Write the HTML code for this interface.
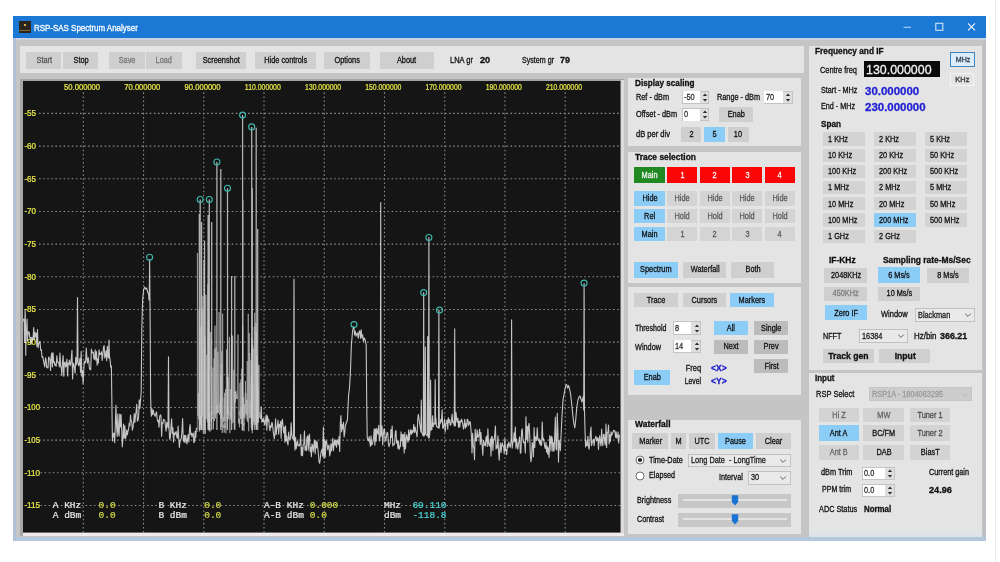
<!DOCTYPE html>
<html lang="en"><head><meta charset="utf-8"><title>RSP-SAS Spectrum Analyser</title>
<style>
html,body{margin:0;padding:0;background:#fff;}
body{position:relative;width:1000px;height:562px;overflow:hidden;font-family:"Liberation Sans",sans-serif;}
#w{position:absolute;left:0;top:0;width:1000px;height:562px;filter:blur(0.5px);}
#w>div,#w>span,#w>svg{position:absolute;display:block;}
#w>span{white-space:pre;-webkit-text-stroke:0.3px;}
svg text{font-family:"Liberation Sans",sans-serif;}
</style></head><body><div id="w">
<div style="left:995.3px;top:0.0px;width:1.0px;height:562.0px;background:#ececec;"></div>
<div style="left:13.0px;top:16.0px;width:973.3px;height:524.6px;background:#c5c5c5;"></div>
<div style="left:13.0px;top:16.0px;width:973.3px;height:22.1px;background:#1b78d4;"></div>
<div style="left:13.0px;top:38.1px;width:973.3px;height:1.5px;background:#ccd0de;"></div>
<div style="left:13.0px;top:536.6px;width:973.3px;height:4.0px;background:#b3c8dd;"></div>
<div style="left:13.0px;top:38.1px;width:3.2px;height:502.5px;background:#b0c2d4;"></div>
<div style="left:982.6px;top:39.6px;width:3.7px;height:497.0px;background:#bcbfc3;"></div>
<div style="left:18.8px;top:21.0px;width:11.8px;height:11.6px;background:#2a2420;"></div>
<div style="left:19.4px;top:29.6px;width:10.6px;height:1.4px;background:#8a6a20;"></div>
<div style="left:23.7px;top:24.0px;width:2.0px;height:1.8px;background:#d8b050;"></div>
<span style="left:34.0px;top:22.0px;font-size:9.2px;line-height:12px;color:#ffffff;transform:scaleX(0.865);transform-origin:0 50%;">RSP-SAS Spectrum Analyser</span>
<svg style="left:900px;top:18px" width="84" height="18" viewBox="0 0 84 18"><path d="M3.5 9.3 H11" stroke="#b4d6f6" stroke-width="1.1"/><rect x="35.8" y="5.3" width="7" height="7" fill="none" stroke="#d2e5f8" stroke-width="1.1"/><path d="M68 5.3 L75 12.3 M75 5.3 L68 12.3" stroke="#f4f8fc" stroke-width="1.1"/></svg>
<div style="left:20.4px;top:46.1px;width:783.4px;height:26.9px;background:#e4e4e4;"></div>
<div style="left:26.2px;top:52.4px;width:35.2px;height:16.2px;background:#cfcfcf;"></div>
<span style="left:34.5px;top:55.2px;font-size:8.8px;line-height:11px;color:#555;transform:scaleX(0.835);transform-origin:50% 50%;">Start</span>
<div style="left:63.4px;top:52.4px;width:34.8px;height:16.2px;background:#cfcfcf;"></div>
<span style="left:71.7px;top:55.2px;font-size:8.8px;line-height:11px;color:#101010;transform:scaleX(0.835);transform-origin:50% 50%;">Stop</span>
<div style="left:109.4px;top:52.4px;width:35.2px;height:16.2px;background:#cfcfcf;"></div>
<span style="left:117.0px;top:55.2px;font-size:8.8px;line-height:11px;color:#777;transform:scaleX(0.835);transform-origin:50% 50%;">Save</span>
<div style="left:146.4px;top:52.4px;width:35.6px;height:16.2px;background:#cfcfcf;"></div>
<span style="left:154.4px;top:55.2px;font-size:8.8px;line-height:11px;color:#777;transform:scaleX(0.835);transform-origin:50% 50%;">Load</span>
<div style="left:195.8px;top:52.4px;width:50.2px;height:16.2px;background:#cfcfcf;"></div>
<span style="left:198.6px;top:55.2px;font-size:8.8px;line-height:11px;color:#101010;transform:scaleX(0.835);transform-origin:50% 50%;">Screenshot</span>
<div style="left:255.0px;top:52.4px;width:61.4px;height:16.2px;background:#cfcfcf;"></div>
<span style="left:260.0px;top:55.2px;font-size:8.8px;line-height:11px;color:#101010;transform:scaleX(0.835);transform-origin:50% 50%;">Hide controls</span>
<div style="left:324.4px;top:52.4px;width:46.0px;height:16.2px;background:#cfcfcf;"></div>
<span style="left:332.2px;top:55.2px;font-size:8.8px;line-height:11px;color:#101010;transform:scaleX(0.835);transform-origin:50% 50%;">Options</span>
<div style="left:380.0px;top:52.4px;width:53.8px;height:16.2px;background:#cfcfcf;"></div>
<span style="left:395.4px;top:55.2px;font-size:8.8px;line-height:11px;color:#101010;transform:scaleX(0.835);transform-origin:50% 50%;">About</span>
<span style="left:449.8px;top:55.3px;font-size:8.8px;line-height:11px;color:#101010;transform:scaleX(0.855);transform-origin:0 50%;">LNA gr</span>
<span style="left:480.2px;top:55.3px;font-size:8.8px;line-height:11px;color:#101010;font-weight:bold;transform:scaleX(1.042);transform-origin:0 50%;">20</span>
<span style="left:522.4px;top:55.3px;font-size:8.8px;line-height:11px;color:#101010;transform:scaleX(0.808);transform-origin:0 50%;">System gr</span>
<span style="left:559.8px;top:55.3px;font-size:8.8px;line-height:11px;color:#101010;font-weight:bold;transform:scaleX(1.022);transform-origin:0 50%;">79</span>
<div style="left:20.4px;top:78.8px;width:603.8px;height:457.6px;background:#a6a6a6;"></div>
<div style="left:23.0px;top:81.0px;width:601.2px;height:455.4px;background:#efebea;"></div>
<div style="left:620.6px;top:79.5px;width:3.6px;height:453.3px;background:#dbdbdb;"></div>
<svg style="left:23.0px;top:81.0px" width="597.6" height="451.6" viewBox="0 0 597.6 451.6">
<rect width="597.6" height="451.6" fill="#151515"/>
<path d="M60.30 11.3 V451.6 M120.54 11.3 V451.6 M180.78 11.3 V451.6 M241.02 11.3 V451.6 M301.26 11.3 V451.6 M361.50 11.3 V451.6 M421.74 11.3 V451.6 M481.98 11.3 V451.6 M542.22 11.3 V451.6 M16.0 32.42 H597.6 M16.0 65.09 H597.6 M16.0 97.76 H597.6 M16.0 130.43 H597.6 M16.0 163.10 H597.6 M16.0 195.77 H597.6 M16.0 228.44 H597.6 M16.0 261.11 H597.6 M16.0 293.78 H597.6 M16.0 326.45 H597.6 M16.0 359.12 H597.6 M17.5 391.79 H597.6 M17.5 424.46 H597.6" stroke="#d8d8d8" stroke-opacity="0.6" stroke-width="1.1" stroke-dasharray="1.6 2.5" fill="none"/>
<text x="59.1" y="9.5" font-size="8.5" fill="#e6e648" stroke="#e6e648" stroke-width="0.25" text-anchor="middle" textLength="36" lengthAdjust="spacingAndGlyphs">50.000000</text>
<text x="119.3" y="9.5" font-size="8.5" fill="#e6e648" stroke="#e6e648" stroke-width="0.25" text-anchor="middle" textLength="36" lengthAdjust="spacingAndGlyphs">70.000000</text>
<text x="179.6" y="9.5" font-size="8.5" fill="#e6e648" stroke="#e6e648" stroke-width="0.25" text-anchor="middle" textLength="36" lengthAdjust="spacingAndGlyphs">90.000000</text>
<text x="239.8" y="9.5" font-size="8.5" fill="#e6e648" stroke="#e6e648" stroke-width="0.25" text-anchor="middle" textLength="36" lengthAdjust="spacingAndGlyphs">110.000000</text>
<text x="300.1" y="9.5" font-size="8.5" fill="#e6e648" stroke="#e6e648" stroke-width="0.25" text-anchor="middle" textLength="36" lengthAdjust="spacingAndGlyphs">130.000000</text>
<text x="360.3" y="9.5" font-size="8.5" fill="#e6e648" stroke="#e6e648" stroke-width="0.25" text-anchor="middle" textLength="36" lengthAdjust="spacingAndGlyphs">150.000000</text>
<text x="420.5" y="9.5" font-size="8.5" fill="#e6e648" stroke="#e6e648" stroke-width="0.25" text-anchor="middle" textLength="36" lengthAdjust="spacingAndGlyphs">170.000000</text>
<text x="480.8" y="9.5" font-size="8.5" fill="#e6e648" stroke="#e6e648" stroke-width="0.25" text-anchor="middle" textLength="36" lengthAdjust="spacingAndGlyphs">190.000000</text>
<text x="541.0" y="9.5" font-size="8.5" fill="#e6e648" stroke="#e6e648" stroke-width="0.25" text-anchor="middle" textLength="36" lengthAdjust="spacingAndGlyphs">210.000000</text>
<text x="1.4" y="35.3" font-size="8.4" fill="#e6e648" stroke="#e6e648" stroke-width="0.25" textLength="11.6" lengthAdjust="spacingAndGlyphs">-55</text>
<text x="1.4" y="68.0" font-size="8.4" fill="#e6e648" stroke="#e6e648" stroke-width="0.25" textLength="11.6" lengthAdjust="spacingAndGlyphs">-60</text>
<text x="1.4" y="100.7" font-size="8.4" fill="#e6e648" stroke="#e6e648" stroke-width="0.25" textLength="11.6" lengthAdjust="spacingAndGlyphs">-65</text>
<text x="1.4" y="133.3" font-size="8.4" fill="#e6e648" stroke="#e6e648" stroke-width="0.25" textLength="11.6" lengthAdjust="spacingAndGlyphs">-70</text>
<text x="1.4" y="166.0" font-size="8.4" fill="#e6e648" stroke="#e6e648" stroke-width="0.25" textLength="11.6" lengthAdjust="spacingAndGlyphs">-75</text>
<text x="1.4" y="198.7" font-size="8.4" fill="#e6e648" stroke="#e6e648" stroke-width="0.25" textLength="11.6" lengthAdjust="spacingAndGlyphs">-80</text>
<text x="1.4" y="231.3" font-size="8.4" fill="#e6e648" stroke="#e6e648" stroke-width="0.25" textLength="11.6" lengthAdjust="spacingAndGlyphs">-85</text>
<text x="1.4" y="264.0" font-size="8.4" fill="#e6e648" stroke="#e6e648" stroke-width="0.25" textLength="11.6" lengthAdjust="spacingAndGlyphs">-90</text>
<text x="1.4" y="296.7" font-size="8.4" fill="#e6e648" stroke="#e6e648" stroke-width="0.25" textLength="11.6" lengthAdjust="spacingAndGlyphs">-95</text>
<text x="1.4" y="329.4" font-size="8.4" fill="#e6e648" stroke="#e6e648" stroke-width="0.25" textLength="15.6" lengthAdjust="spacingAndGlyphs">-100</text>
<text x="1.4" y="362.0" font-size="8.4" fill="#e6e648" stroke="#e6e648" stroke-width="0.25" textLength="15.6" lengthAdjust="spacingAndGlyphs">-105</text>
<text x="1.4" y="394.7" font-size="8.4" fill="#e6e648" stroke="#e6e648" stroke-width="0.25" textLength="15.6" lengthAdjust="spacingAndGlyphs">-110</text>
<text x="1.4" y="427.4" font-size="8.4" fill="#e6e648" stroke="#e6e648" stroke-width="0.25" textLength="15.6" lengthAdjust="spacingAndGlyphs">-115</text>
<path d="M174.40 351.0 L174.40 172.0 L174.85 335.0 L175.31 312.2 L175.76 338.3 L176.19 228.3 L176.64 350.7 L177.24 335.0 L177.69 344.0 L178.06 245.8 L178.51 348.1 L178.98 226.5 L179.43 335.5 L179.91 214.8 L180.36 352.5 L180.87 179.0 L181.32 337.2 L181.87 255.2 L182.32 352.9 L182.81 213.8 L183.26 338.2 L183.96 273.7 L184.41 341.3 L184.91 202.8 L185.36 338.6 L185.76 238.0 L186.21 350.3 L186.74 332.0 L187.19 350.5 L187.73 251.0 L188.18 340.8 L188.86 336.1 L189.31 338.0 L190.04 286.6 L190.49 348.3 L191.06 277.5 L191.51 340.0 L191.98 244.6 L192.43 337.4 L192.94 266.3 L193.39 332.6 L194.12 329.6 L194.57 331.8 L194.93 270.8 L195.38 332.1 L196.10 231.1 L196.55 334.0 L196.98 321.7 L197.43 331.5 L197.90 293.7 L198.35 338.1 L198.79 270.2 L199.24 352.0 L199.65 232.7 L200.10 340.9 L200.80 335.9 L201.25 351.6 L201.61 311.8 L202.06 340.5 L202.55 308.1 L203.00 352.3 L203.53 268.4 L203.98 340.5 L204.40 294.6 L204.85 333.6 L205.22 296.0 L205.67 338.1 L206.38 255.9 L206.83 352.2 L207.28 308.4 L207.73 338.5 L208.46 253.5 L208.91 342.5 L209.64 254.6 L210.09 341.6 L210.81 288.8 L211.26 347.8 L211.92 311.0 L212.37 321.3 L212.75 311.0 L213.20 317.8 L213.91 312.7 L214.36 318.2 L214.99 253.5 L215.44 341.3 L216.06 337.6 L216.51 346.3 L217.01 302.0 L217.46 337.9 L217.94 298.5 L218.39 343.1 L218.78 287.8 L219.23 349.8 L219.60 244.4 L220.05 336.8 L220.63 316.3 L221.08 350.3 L221.47 323.1 L221.92 337.4 L222.51 300.2 L222.96 333.2 L223.39 319.1 L223.84 334.3 L224.23 280.1 L224.68 341.2 L225.26 232.8 L225.71 350.3 L226.20 252.1 L226.65 337.1 L227.17 319.2 L227.62 336.3 L228.00 279.4 L228.45 343.1 L228.84 256.9 L229.29 352.3 L229.84 264.4 L230.29 340.8 L230.89 267.8 L231.34 348.7 L231.76 231.8 L232.21 343.4 L232.92 241.9 L233.37 348.1 L233.94 275.8 L234.39 341.4 L234.91 283.6 L235.36 341.8 L236.01 284.2 L236.46 336.6 L236.60 331.0" stroke="#bdbdbd" stroke-width="0.75" stroke-opacity="0.8" fill="none" stroke-linejoin="round"/>
<path d="M180.01 230.3 V349.2 M181.65 266.9 V352.4 M185.63 251.7 V347.9 M186.46 342.5 V345.1 M188.65 330.0 V333.9 M191.72 268.0 V333.9 M194.40 323.8 V330.0 M198.17 316.0 V337.0 M198.73 282.7 V346.1 M200.61 343.6 V347.2 M201.42 316.9 V338.8 M202.47 341.8 V347.4 M204.59 325.6 V333.4 M207.44 330.5 V334.7 M212.79 309.8 V311.9 M216.27 338.3 V342.9 M216.80 329.9 V334.5 M218.13 326.4 V337.2 M220.49 342.3 V344.6 M221.26 329.4 V335.8 M222.62 311.7 V331.4 M223.33 326.3 V330.4 M224.12 318.5 V339.3 M226.44 272.0 V332.2 M227.20 328.3 V330.8 M227.87 302.6 V337.5 M228.62 294.9 V346.5 M230.83 302.4 V343.7 M231.53 245.4 V339.0 M233.12 251.0 V344.6 M234.98 305.7 V340.4" stroke="#b8b8b8" stroke-width="1.9" stroke-opacity="0.62" fill="none"/>
<path d="M177.20 118.5 V349.0 M186.30 118.5 V349.0 M193.90 81.0 V349.0 M197.80 88.0 V349.0 M204.50 107.3 V349.0 M219.60 34.1 V349.0 M228.70 45.9 V349.0 M233.20 46.8 V349.0 M219.90 119.0 V349.0 M229.30 107.0 V349.0 M234.70 148.0 V349.0 M208.60 195.0 V349.0 M211.80 195.0 V349.0 M181.60 159.7 V349.0 M185.10 134.0 V349.0 M188.70 141.0 V349.0 M176.30 133.0 V349.0 M178.60 141.0 V349.0" stroke="#d0d0d0" stroke-width="1.25" stroke-opacity="0.85" fill="none"/>
<path d="M0.20 238.2 L0.52 238.1 L0.85 240.4 L1.17 238.2 L1.49 261.2 L1.82 241.4 L2.14 228.3 L2.46 242.4 L2.78 274.3 L3.11 248.4 L3.43 253.0 L3.75 244.9 L4.08 238.0 L4.40 259.6 L5.03 253.0 L5.66 250.6 L6.29 251.6 L6.92 257.3 L7.55 256.5 L8.18 263.2 L8.81 256.2 L9.44 259.3 L10.07 257.4 L10.70 246.5 L11.33 258.4 L11.96 251.3 L12.59 255.9 L13.22 252.0 L13.85 265.4 L14.48 248.6 L15.11 266.7 L15.74 262.5 L16.37 261.6 L17.00 260.5 L17.69 269.3 L18.38 268.8 L19.06 276.3 L19.75 275.6 L20.44 279.3 L21.12 283.1 L21.81 286.0 L22.50 276.7 L23.13 279.2 L23.76 286.8 L24.39 286.1 L25.02 286.9 L25.65 276.0 L26.28 277.3 L26.91 278.6 L27.54 289.5 L28.17 275.6 L28.80 271.8 L29.43 286.0 L30.06 271.9 L30.69 281.5 L31.32 280.8 L31.95 284.6 L32.58 283.1 L33.21 285.3 L33.84 274.9 L34.47 281.1 L35.10 281.4 L35.73 281.6 L36.36 285.9 L36.99 272.0 L37.62 285.0 L38.25 286.7 L38.88 294.6 L39.51 280.2 L40.14 274.6 L40.77 295.2 L41.40 281.8 L42.03 281.0 L42.66 286.0 L43.29 284.3 L43.92 278.1 L44.55 294.9 L45.18 282.2 L45.81 283.0 L46.44 279.0 L47.07 284.6 L47.70 283.5 L48.33 277.9 L48.96 269.2 L49.59 297.9 L50.22 282.0 L50.85 283.7 L51.48 287.0 L52.11 292.3 L52.74 276.4 L53.37 283.8 L54.00 281.0 L54.50 216.6 L55.00 281.0 L55.00 280.6 L55.64 284.8 L56.27 283.3 L56.91 277.2 L57.55 291.5 L58.18 270.4 L58.82 295.3 L59.45 289.2 L60.09 302.6 L60.73 290.0 L61.36 280.1 L62.00 281.7 L62.64 281.6 L63.27 267.0 L63.91 278.2 L64.55 282.2 L65.18 276.5 L65.82 280.4 L66.45 287.6 L67.09 288.4 L67.73 288.9 L68.36 268.0 L69.00 271.9 L69.64 271.0 L70.28 271.2 L70.92 278.1 L71.55 278.3 L72.19 268.8 L72.83 279.3 L73.47 270.6 L74.11 284.2 L74.75 277.7 L75.38 282.2 L76.02 268.7 L76.66 273.9 L77.30 272.4 L77.94 273.1 L78.58 270.7 L79.22 279.4 L79.85 273.7 L80.49 266.3 L81.13 264.6 L81.77 277.0 L82.41 275.1 L83.05 269.9 L83.68 279.7 L84.32 265.3 L84.96 275.4 L85.50 277.0 L86.00 259.0 L86.50 277.0 L86.50 275.4 L87.12 279.1 L87.75 286.2 L88.38 284.9 L89.40 360.0 L89.80 352.1 L90.43 356.0 L91.07 352.0 L91.70 361.7 L92.33 343.5 L92.97 324.2 L93.60 345.9 L94.23 355.2 L94.87 333.0 L95.50 351.0 L96.13 355.1 L96.77 333.0 L97.40 345.9 L98.03 333.5 L98.67 347.7 L99.30 366.0 L99.93 357.9 L100.57 343.1 L101.20 357.2 L101.83 344.9 L102.47 357.5 L103.10 355.6 L103.73 348.9 L104.37 353.8 L105.00 350.2 L105.62 348.1 L106.25 342.0 L106.88 344.9 L107.50 334.0 L108.12 339.8 L108.75 340.9 L109.38 349.2 L110.00 346.3 L110.62 341.5 L111.25 332.6 L111.88 341.5 L112.50 334.6 L113.12 330.3 L113.75 323.2 L114.38 340.2 L115.00 339.5 L115.62 335.7 L116.25 318.7 L116.88 327.4 L118.20 311.0 L118.80 249.0 L119.60 219.0 L120.60 209.0 L121.60 206.0 L122.60 208.0 L123.60 207.0 L124.60 211.0 L125.60 213.0 L126.00 219.0 L126.25 219.0 L126.60 178.5 L126.95 219.0 L127.20 249.0 L127.60 314.0 L128.00 329.0 L128.40 335.3 L129.04 327.9 L129.68 333.7 L130.32 329.4 L130.95 332.6 L131.59 334.3 L132.23 335.3 L132.87 332.4 L133.51 330.9 L134.15 337.5 L134.78 340.7 L135.42 339.3 L136.06 346.1 L136.70 335.5 L137.34 333.9 L137.98 334.6 L138.62 355.2 L139.25 341.8 L139.89 342.3 L140.53 338.3 L141.17 338.9 L141.81 339.5 L142.45 345.3 L143.08 350.1 L143.72 341.6 L144.36 342.2 L145.00 347.0 L145.50 275.7 L146.00 347.0 L146.00 346.5 L146.65 358.2 L147.30 357.0 L147.95 346.1 L148.60 337.7 L149.25 352.4 L149.90 346.9 L150.55 361.2 L151.20 351.8 L151.85 354.0 L152.50 351.6 L153.15 350.5 L153.80 356.2 L154.45 357.3 L155.10 345.0 L155.75 357.3 L156.40 366.5 L157.05 360.3 L157.70 359.1 L158.35 356.8 L159.00 349.0 L159.62 337.6 L160.25 357.9 L160.88 360.8 L161.50 354.2 L162.12 361.8 L162.75 354.3 L163.38 358.9 L164.00 362.9 L164.62 357.6 L165.25 353.6 L165.88 360.9 L166.50 348.2 L167.12 343.6 L167.75 353.6 L168.38 352.2 L169.00 356.0 L169.62 352.9 L170.25 352.2 L170.88 361.7 L171.50 360.9 L172.12 350.4 L172.75 356.8 L173.38 346.7" stroke="#ececec" stroke-width="1.1" stroke-opacity="0.82" fill="none" stroke-linejoin="round"/>
<path d="M237.00 337.6 L237.62 337.4 L238.25 325.8 L238.87 341.2 L239.49 338.4 L240.11 340.6 L240.74 337.2 L241.36 342.6 L241.98 344.1 L242.60 338.0 L243.23 333.8 L243.85 349.2 L244.47 334.9 L245.09 340.4 L245.72 338.3 L246.34 345.9 L246.96 349.8 L247.58 344.6 L248.21 346.2 L248.83 341.2 L249.45 342.8 L250.08 349.4 L250.70 354.0 L251.32 357.7 L251.94 352.5 L252.57 337.8 L253.19 353.7 L253.81 347.6 L254.43 344.6 L255.06 339.2 L255.68 353.2 L256.30 343.3 L256.92 345.9 L257.55 340.6 L258.17 357.3 L258.79 339.9 L259.42 338.4 L260.04 345.2 L260.66 351.7 L261.28 346.0 L261.91 361.3 L262.53 344.7 L263.15 360.0 L263.77 355.1 L264.40 361.5 L265.02 363.9 L265.64 351.1 L266.26 357.4 L266.89 358.4 L267.51 358.1 L268.13 341.7 L268.75 353.3 L269.38 356.6 L270.50 359.0 L271.00 198.0 L271.50 359.0 L272.00 369.1 L272.63 356.4 L273.26 367.7 L273.89 362.8 L274.52 360.2 L275.15 365.0 L275.78 364.0 L276.41 364.8 L277.04 362.6 L277.67 353.5 L278.30 374.6 L278.93 366.5 L279.57 374.6 L280.20 363.6 L280.83 363.0 L281.46 350.1 L282.09 369.2 L282.72 365.4 L283.35 369.7 L283.98 356.6 L284.61 354.9 L285.24 369.2 L285.87 355.4 L286.50 353.2 L287.13 370.4 L287.76 366.4 L288.39 375.7 L289.02 363.0 L289.65 364.6 L290.28 370.9 L290.91 364.0 L291.54 359.0 L292.17 372.7 L292.80 359.9 L293.43 366.9 L294.07 360.6 L294.70 366.9 L295.33 371.5 L295.96 380.0 L296.59 382.3 L297.22 378.6 L297.85 372.2 L298.48 369.9 L299.11 368.0 L299.74 375.2 L300.37 346.1 L301.00 377.1 L301.63 358.5 L302.26 376.2 L302.89 360.1 L303.51 360.0 L304.14 364.3 L304.77 368.9 L305.40 364.8 L306.03 364.2 L306.66 375.0 L307.29 372.0 L307.91 362.8 L308.54 370.0 L309.17 364.4 L309.80 357.2 L310.43 369.8 L311.06 363.1 L311.69 358.8 L312.31 364.3 L312.94 359.6 L313.57 366.1 L314.20 358.6 L314.83 360.6 L315.46 363.7 L316.09 355.6 L316.71 370.5 L317.34 341.5 L317.97 334.6 L318.60 350.7 L319.23 343.5 L319.86 348.0 L320.49 341.3 L321.11 355.9 L321.74 351.9 L322.37 344.7 L324.40 339.0 L325.60 314.0 L326.50 307.0 L327.40 291.0 L328.40 264.0 L329.60 250.0 L330.60 245.5 L331.20 249.0 L331.60 254.0 L332.33 250.3 L333.07 255.2 L333.80 252.6 L334.53 252.1 L335.27 257.3 L336.00 250.8 L336.73 249.8 L337.47 257.2 L338.20 248.7 L338.93 256.9 L339.67 253.9 L340.40 260.4 L341.13 257.1 L341.87 257.9 L343.20 264.0 L343.70 319.0 L344.20 357.0 L344.80 358.6 L345.44 360.0 L346.08 355.6 L346.73 360.4 L347.37 365.4 L348.01 354.8 L348.65 363.9 L349.29 362.9 L349.94 360.9 L350.58 356.7 L351.22 347.8 L351.86 364.2 L352.51 348.0 L353.15 360.3 L353.79 347.2 L354.43 351.2 L355.07 353.2 L355.72 344.2 L356.36 359.9 L357.30 355.0 L357.70 121.6 L358.10 355.0 L358.40 348.8 L359.03 344.7 L359.67 363.9 L360.30 354.3 L360.93 348.1 L361.57 348.4 L362.20 358.7 L362.83 359.9 L363.47 355.0 L364.10 351.4 L364.73 351.7 L365.37 362.3 L366.00 365.6 L366.63 363.2 L367.27 361.6 L367.90 348.6 L368.53 356.5 L369.17 345.0 L369.80 365.0 L370.43 363.3 L371.07 363.7 L371.70 362.0 L372.33 351.0 L372.97 349.6 L373.60 362.1 L374.23 359.3 L374.87 367.5 L375.50 360.0 L376.13 368.5 L376.77 365.1 L377.40 365.6 L378.03 350.7 L378.67 359.8 L379.30 353.2 L379.93 365.2 L380.57 353.6 L381.20 371.9 L381.83 351.6 L382.47 367.9 L383.10 358.6 L383.73 353.9 L384.37 358.1 L385.00 361.2 L385.65 348.9 L386.29 358.9 L386.94 352.3 L387.59 348.9 L388.24 353.5 L388.88 349.0 L389.53 352.1 L390.18 350.5 L390.82 343.3 L391.47 351.4 L392.12 346.1 L392.76 349.8 L393.41 352.2 L394.06 355.9 L394.71 338.8 L395.35 333.4 L397.90 351.0 L398.30 319.0 L398.70 351.0 L400.30 355.0 L400.70 211.6 L401.10 355.0 L401.90 353.0 L402.30 266.0 L402.70 353.0 L404.30 355.0 L404.70 255.5 L405.10 355.0 L405.50 357.0 L405.90 156.5 L406.30 357.0 L407.20 349.0 L407.60 299.0 L408.00 349.0 L408.20 345.0 L408.88 348.7 L409.56 334.8 L410.24 345.6 L410.92 342.4 L411.80 343.0 L412.20 298.6 L412.60 343.0 L412.80 336.5 L413.53 345.6 L414.27 346.0 L415.50 347.0 L415.90 229.1 L416.30 347.0 L416.60 343.3 L417.23 342.7 L417.85 338.3 L418.48 341.0 L419.10 328.8 L419.73 347.0 L420.36 347.3 L420.98 343.5 L421.61 338.0 L422.23 351.0 L422.86 343.3 L423.49 342.0 L424.11 338.9 L424.74 348.1 L425.37 336.7 L425.99 341.4 L426.62 338.5 L427.24 344.3 L427.87 343.8 L428.50 339.1 L429.12 333.0 L429.75 341.7 L430.37 340.6 L431.30 345.0 L431.70 247.9 L432.10 345.0 L432.40 344.6 L433.02 331.2 L433.65 337.7 L434.27 341.1 L434.90 337.1 L435.52 346.3 L436.14 340.0 L436.77 346.2 L437.39 339.8 L438.02 340.9 L438.64 338.1 L439.26 340.6 L439.89 344.0 L440.51 348.2 L441.14 343.9 L441.76 338.3 L442.38 347.2 L443.01 342.5 L443.63 345.6 L444.26 338.4 L444.88 338.6 L445.50 344.5 L446.13 343.3 L446.75 340.6 L447.38 341.2 L448.60 357.0 L449.00 372.0 L449.64 352.4 L450.27 364.6 L450.91 367.3 L451.55 378.6 L452.18 348.2 L452.82 359.8 L453.45 360.0 L454.09 348.9 L454.73 356.2 L455.36 356.2 L456.00 353.1 L456.64 348.0 L457.27 363.4 L457.91 351.2 L458.55 359.9 L459.18 365.0 L459.82 374.2 L460.45 359.4 L461.09 361.6 L461.73 364.5 L462.36 364.9 L463.00 356.6 L463.63 355.2 L464.26 365.5 L464.89 347.7 L465.51 361.8 L466.14 364.5 L466.77 365.1 L467.40 357.7 L468.03 375.1 L468.66 355.4 L469.29 356.1 L469.91 369.5 L470.54 358.2 L471.17 358.4 L471.80 353.4 L472.43 345.0 L473.06 368.1 L473.69 364.4 L474.31 366.9 L474.94 354.8 L475.57 370.5 L476.20 379.3 L476.83 368.0 L477.46 362.1 L478.09 371.4 L478.71 365.1 L479.34 361.7 L479.97 365.0 L480.60 365.3 L481.23 372.6 L481.86 357.6 L482.49 369.6 L483.11 368.8 L483.74 373.6 L484.37 363.2 L485.00 366.7 L485.75 361.0 L486.50 364.3 L487.25 366.3 L488.20 359.0 L488.60 238.8 L489.00 359.0 L489.20 367.3 L489.83 361.7 L490.45 360.3 L491.08 351.7 L491.70 360.8 L492.33 346.1 L492.95 367.2 L493.58 357.8 L494.21 364.4 L494.83 368.1 L495.46 362.9 L496.08 360.2 L496.71 355.7 L497.33 372.3 L497.96 371.6 L498.58 350.1 L499.21 347.9 L499.84 356.8 L500.46 361.7 L501.09 360.8 L501.71 362.3 L502.34 372.0 L502.96 335.9 L503.59 358.2 L504.22 345.3 L504.84 361.1 L505.47 345.3 L506.09 342.3 L506.72 354.8 L507.34 373.8 L507.97 380.8 L508.59 375.6 L509.22 361.6 L509.85 363.6 L510.47 375.7 L511.10 346.5 L511.72 366.4 L512.35 356.0 L512.97 355.8 L513.60 359.5 L514.23 346.9 L514.85 357.6 L515.48 359.9 L516.10 357.9 L516.73 363.1 L517.35 359.2 L517.98 364.6 L518.61 363.8 L519.23 341.1 L519.86 359.1 L520.48 357.4 L521.11 361.1 L521.73 365.7 L522.36 367.5 L522.98 361.2 L523.61 371.2 L524.24 365.1 L524.86 373.2 L525.49 366.7 L526.11 376.4 L526.74 354.6 L527.36 356.4 L527.99 369.9 L528.62 355.2 L529.24 357.5 L529.87 370.3 L530.49 361.8 L531.12 370.0 L531.74 353.8 L532.37 336.1 L532.99 367.5 L533.62 368.9 L534.25 332.4 L534.87 348.9 L535.50 381.1 L536.12 359.3 L536.75 364.8 L537.37 369.8 L538.80 339.0 L540.00 319.0 L541.50 311.0 L542.60 305.0 L543.60 303.5 L544.60 307.0 L545.60 304.5 L546.60 308.0 L547.60 313.0 L548.80 324.0 L549.80 334.0 L550.80 342.0 L551.80 347.0 L552.80 338.0 L553.80 326.0 L555.00 319.0 L556.00 316.0 L557.00 315.0 L558.00 318.0 L559.00 321.0 L560.40 315.0 L560.70 329.0 L561.10 202.5 L561.50 329.0 L562.00 349.0 L562.60 366.0 L563.00 359.2 L563.62 364.8 L564.25 364.4 L564.88 355.2 L565.50 365.9 L566.12 368.2 L566.75 362.3 L567.38 352.1 L568.00 346.0 L568.62 364.7 L569.25 361.3 L569.88 360.2 L570.50 358.3 L571.12 364.7 L571.75 358.5 L572.38 356.9 L573.00 355.2 L573.62 359.9 L574.25 358.0 L574.88 356.7 L575.50 368.4 L576.12 358.9 L576.75 354.7 L577.38 361.8 L578.00 365.0 L578.62 348.0 L579.25 361.3 L579.88 364.8 L580.50 353.2 L581.12 353.5 L581.75 360.9 L582.38 364.1 L583.00 343.0 L583.63 366.4 L584.27 351.5 L584.90 351.2 L585.54 344.1 L586.17 362.9 L586.81 353.9 L587.44 360.5 L588.08 350.8 L588.71 354.5 L589.35 352.4 L589.98 351.3 L590.62 349.2 L591.25 349.9 L591.89 349.9 L592.52 356.4 L593.16 350.9 L593.79 357.1 L594.43 356.6 L595.06 351.0 L595.70 362.0 L596.33 354.2 L596.97 354.3" stroke="#ececec" stroke-width="1.1" stroke-opacity="0.82" fill="none" stroke-linejoin="round"/>
<circle cx="126.6" cy="176.2" r="3" fill="none" stroke="#3fb8ae" stroke-width="1.1"/>
<circle cx="177.2" cy="118.5" r="3" fill="none" stroke="#3fb8ae" stroke-width="1.1"/>
<circle cx="186.3" cy="118.5" r="3" fill="none" stroke="#3fb8ae" stroke-width="1.1"/>
<circle cx="193.9" cy="81.0" r="3" fill="none" stroke="#3fb8ae" stroke-width="1.1"/>
<circle cx="204.5" cy="107.3" r="3" fill="none" stroke="#3fb8ae" stroke-width="1.1"/>
<circle cx="219.6" cy="34.1" r="3" fill="none" stroke="#3fb8ae" stroke-width="1.1"/>
<circle cx="228.7" cy="45.9" r="3" fill="none" stroke="#3fb8ae" stroke-width="1.1"/>
<circle cx="331.0" cy="243.6" r="3" fill="none" stroke="#3fb8ae" stroke-width="1.1"/>
<circle cx="400.7" cy="211.6" r="3" fill="none" stroke="#3fb8ae" stroke-width="1.1"/>
<circle cx="405.9" cy="156.5" r="3" fill="none" stroke="#3fb8ae" stroke-width="1.1"/>
<circle cx="416.5" cy="229.1" r="3" fill="none" stroke="#3fb8ae" stroke-width="1.1"/>
<circle cx="561.1" cy="202.1" r="3" fill="none" stroke="#3fb8ae" stroke-width="1.1"/>
<text x="29.8" y="426.6" font-size="9.5" fill="#e4e4e4" stroke="#e4e4e4" stroke-width="0.25" style="font-family:'Liberation Mono',monospace">A KHz</text>
<text x="75.6" y="426.6" font-size="9.5" fill="#d2d844" stroke="#d2d844" stroke-width="0.25" style="font-family:'Liberation Mono',monospace">0.0</text>
<text x="29.8" y="437.4" font-size="9.5" fill="#e4e4e4" stroke="#e4e4e4" stroke-width="0.25" style="font-family:'Liberation Mono',monospace">A dBm</text>
<text x="75.6" y="437.4" font-size="9.5" fill="#d2d844" stroke="#d2d844" stroke-width="0.25" style="font-family:'Liberation Mono',monospace">0.0</text>
<text x="135.4" y="426.6" font-size="9.5" fill="#e4e4e4" stroke="#e4e4e4" stroke-width="0.25" style="font-family:'Liberation Mono',monospace">B KHz</text>
<text x="181.2" y="426.6" font-size="9.5" fill="#d2d844" stroke="#d2d844" stroke-width="0.25" style="font-family:'Liberation Mono',monospace">0.0</text>
<text x="135.4" y="437.4" font-size="9.5" fill="#e4e4e4" stroke="#e4e4e4" stroke-width="0.25" style="font-family:'Liberation Mono',monospace">B dBm</text>
<text x="181.2" y="437.4" font-size="9.5" fill="#d2d844" stroke="#d2d844" stroke-width="0.25" style="font-family:'Liberation Mono',monospace">0.0</text>
<text x="241.0" y="426.6" font-size="9.5" fill="#e4e4e4" stroke="#e4e4e4" stroke-width="0.25" style="font-family:'Liberation Mono',monospace">A-B KHz</text>
<text x="286.8" y="426.6" font-size="9.5" fill="#d2d844" stroke="#d2d844" stroke-width="0.25" style="font-family:'Liberation Mono',monospace">0.000</text>
<text x="241.0" y="437.4" font-size="9.5" fill="#e4e4e4" stroke="#e4e4e4" stroke-width="0.25" style="font-family:'Liberation Mono',monospace">A-B dBm</text>
<text x="286.8" y="437.4" font-size="9.5" fill="#d2d844" stroke="#d2d844" stroke-width="0.25" style="font-family:'Liberation Mono',monospace">0.0</text>
<text x="361.0" y="426.6" font-size="9.5" fill="#e4e4e4" stroke="#e4e4e4" stroke-width="0.25" style="font-family:'Liberation Mono',monospace">MHz</text>
<text x="389.4" y="426.6" font-size="9.5" fill="#48d2d2" stroke="#48d2d2" stroke-width="0.25" style="font-family:'Liberation Mono',monospace">69.110</text>
<text x="361.0" y="437.4" font-size="9.5" fill="#e4e4e4" stroke="#e4e4e4" stroke-width="0.25" style="font-family:'Liberation Mono',monospace">dBm</text>
<text x="389.4" y="437.4" font-size="9.5" fill="#48d2d2" stroke="#48d2d2" stroke-width="0.25" style="font-family:'Liberation Mono',monospace">-118.8</text>
</svg>
<div style="left:627.8px;top:77.5px;width:173.4px;height:68.6px;background:#e4e4e4;"></div>
<div style="left:627.8px;top:151.9px;width:173.4px;height:131.4px;background:#e4e4e4;"></div>
<div style="left:627.8px;top:287.0px;width:173.4px;height:107.9px;background:#e4e4e4;"></div>
<div style="left:627.8px;top:420.0px;width:173.4px;height:113.7px;background:#e4e4e4;"></div>
<span style="left:634.8px;top:77.7px;font-size:8.8px;line-height:11px;color:#101010;font-weight:bold;transform:scaleX(0.927);transform-origin:0 50%;">Display scaling</span>
<span style="left:636.0px;top:92.1px;font-size:8.8px;line-height:11px;color:#101010;transform:scaleX(0.833);transform-origin:0 50%;">Ref - dBm</span>
<div style="left:681.9px;top:90.5px;width:27.6px;height:13.8px;background:#dedede;box-shadow:inset 0 0 0 0.7px #bcbcbc;"></div>
<div style="left:682.6px;top:91.3px;width:17.4px;height:12.2px;background:#ffffff;"></div>
<span style="left:684.1px;top:92.1px;font-size:8.8px;line-height:11px;color:#303030;transform:scaleX(0.835);transform-origin:0 50%;">-50</span>
<svg style="left:702.0px;top:91.9px" width="6" height="11" viewBox="0 0 6 11"><path d="M0.8 4 L3 1.4 L5.2 4 Z M0.8 7 L3 9.6 L5.2 7 Z" fill="#303030"/></svg>
<span style="left:717.0px;top:92.1px;font-size:8.8px;line-height:11px;color:#101010;transform:scaleX(0.829);transform-origin:0 50%;">Range - dBm</span>
<div style="left:763.7px;top:90.5px;width:29.5px;height:13.8px;background:#dedede;box-shadow:inset 0 0 0 0.7px #bcbcbc;"></div>
<div style="left:764.4px;top:91.3px;width:18.4px;height:12.2px;background:#ffffff;"></div>
<span style="left:765.9px;top:92.1px;font-size:8.8px;line-height:11px;color:#303030;transform:scaleX(0.835);transform-origin:0 50%;">70</span>
<svg style="left:785.3px;top:91.9px" width="6" height="11" viewBox="0 0 6 11"><path d="M0.8 4 L3 1.4 L5.2 4 Z M0.8 7 L3 9.6 L5.2 7 Z" fill="#303030"/></svg>
<span style="left:636.0px;top:108.7px;font-size:8.8px;line-height:11px;color:#101010;transform:scaleX(0.833);transform-origin:0 50%;">Offset - dBm</span>
<div style="left:681.9px;top:108.0px;width:27.6px;height:13.4px;background:#dedede;box-shadow:inset 0 0 0 0.7px #bcbcbc;"></div>
<div style="left:682.6px;top:108.8px;width:17.4px;height:11.8px;background:#ffffff;"></div>
<span style="left:684.1px;top:109.4px;font-size:8.8px;line-height:11px;color:#303030;transform:scaleX(0.835);transform-origin:0 50%;">0</span>
<svg style="left:702.0px;top:109.2px" width="6" height="11" viewBox="0 0 6 11"><path d="M0.8 4 L3 1.4 L5.2 4 Z M0.8 7 L3 9.6 L5.2 7 Z" fill="#303030"/></svg>
<div style="left:718.6px;top:107.0px;width:34.7px;height:14.8px;background:#cfcfcf;"></div>
<span style="left:725.7px;top:109.1px;font-size:8.8px;line-height:11px;color:#101010;transform:scaleX(0.835);transform-origin:50% 50%;">Enab</span>
<span style="left:636.0px;top:129.2px;font-size:8.8px;line-height:11px;color:#101010;transform:scaleX(0.858);transform-origin:0 50%;">dB per div</span>
<div style="left:681.3px;top:126.7px;width:20.2px;height:15.3px;background:#cfcfcf;"></div>
<span style="left:689.0px;top:129.0px;font-size:8.8px;line-height:11px;color:#101010;transform:scaleX(0.835);transform-origin:50% 50%;">2</span>
<div style="left:704.3px;top:126.7px;width:20.4px;height:15.3px;background:#8ccdf7;"></div>
<span style="left:712.1px;top:129.0px;font-size:8.8px;line-height:11px;color:#101010;transform:scaleX(0.835);transform-origin:50% 50%;">5</span>
<div style="left:728.0px;top:126.7px;width:20.5px;height:15.3px;background:#cfcfcf;"></div>
<span style="left:733.4px;top:129.0px;font-size:8.8px;line-height:11px;color:#101010;transform:scaleX(0.835);transform-origin:50% 50%;">10</span>
<span style="left:634.8px;top:151.8px;font-size:8.8px;line-height:11px;color:#101010;font-weight:bold;transform:scaleX(0.959);transform-origin:0 50%;">Trace selection</span>
<div style="left:634.3px;top:167.2px;width:30.4px;height:16.0px;background:#1f8a22;"></div>
<span style="left:640.0px;top:169.9px;font-size:8.8px;line-height:11px;color:#f4f4f4;transform:scaleX(0.835);transform-origin:50% 50%;">Main</span>
<div style="left:667.2px;top:167.2px;width:29.9px;height:16.0px;background:#fb0505;"></div>
<span style="left:679.7px;top:169.9px;font-size:8.8px;line-height:11px;color:#f4f4f4;transform:scaleX(0.835);transform-origin:50% 50%;">1</span>
<div style="left:699.7px;top:167.2px;width:29.9px;height:16.0px;background:#fb0505;"></div>
<span style="left:712.2px;top:169.9px;font-size:8.8px;line-height:11px;color:#f4f4f4;transform:scaleX(0.835);transform-origin:50% 50%;">2</span>
<div style="left:732.2px;top:167.2px;width:29.7px;height:16.0px;background:#fb0505;"></div>
<span style="left:744.6px;top:169.9px;font-size:8.8px;line-height:11px;color:#f4f4f4;transform:scaleX(0.835);transform-origin:50% 50%;">3</span>
<div style="left:764.7px;top:167.2px;width:30.1px;height:16.0px;background:#fb0505;"></div>
<span style="left:777.3px;top:169.9px;font-size:8.8px;line-height:11px;color:#f4f4f4;transform:scaleX(0.835);transform-origin:50% 50%;">4</span>
<div style="left:634.3px;top:190.8px;width:30.4px;height:14.9px;background:#8ccdf7;"></div>
<span style="left:640.5px;top:192.9px;font-size:8.8px;line-height:11px;color:#101010;transform:scaleX(0.835);transform-origin:50% 50%;">Hide</span>
<div style="left:667.2px;top:190.8px;width:29.9px;height:14.9px;background:#d4d4d4;"></div>
<span style="left:673.1px;top:192.9px;font-size:8.8px;line-height:11px;color:#5a5a5a;transform:scaleX(0.835);transform-origin:50% 50%;">Hide</span>
<div style="left:699.7px;top:190.8px;width:29.9px;height:14.9px;background:#d4d4d4;"></div>
<span style="left:705.6px;top:192.9px;font-size:8.8px;line-height:11px;color:#5a5a5a;transform:scaleX(0.835);transform-origin:50% 50%;">Hide</span>
<div style="left:732.2px;top:190.8px;width:29.7px;height:14.9px;background:#d4d4d4;"></div>
<span style="left:738.0px;top:192.9px;font-size:8.8px;line-height:11px;color:#5a5a5a;transform:scaleX(0.835);transform-origin:50% 50%;">Hide</span>
<div style="left:764.7px;top:190.8px;width:30.1px;height:14.9px;background:#d4d4d4;"></div>
<span style="left:770.7px;top:192.9px;font-size:8.8px;line-height:11px;color:#5a5a5a;transform:scaleX(0.835);transform-origin:50% 50%;">Hide</span>
<div style="left:634.3px;top:208.5px;width:30.4px;height:14.7px;background:#8ccdf7;"></div>
<span style="left:642.9px;top:210.5px;font-size:8.8px;line-height:11px;color:#101010;transform:scaleX(0.835);transform-origin:50% 50%;">Rel</span>
<div style="left:667.2px;top:208.5px;width:29.9px;height:14.7px;background:#d4d4d4;"></div>
<span style="left:673.1px;top:210.5px;font-size:8.8px;line-height:11px;color:#5a5a5a;transform:scaleX(0.835);transform-origin:50% 50%;">Hold</span>
<div style="left:699.7px;top:208.5px;width:29.9px;height:14.7px;background:#d4d4d4;"></div>
<span style="left:705.6px;top:210.5px;font-size:8.8px;line-height:11px;color:#5a5a5a;transform:scaleX(0.835);transform-origin:50% 50%;">Hold</span>
<div style="left:732.2px;top:208.5px;width:29.7px;height:14.7px;background:#d4d4d4;"></div>
<span style="left:738.0px;top:210.5px;font-size:8.8px;line-height:11px;color:#5a5a5a;transform:scaleX(0.835);transform-origin:50% 50%;">Hold</span>
<div style="left:764.7px;top:208.5px;width:30.1px;height:14.7px;background:#d4d4d4;"></div>
<span style="left:770.7px;top:210.5px;font-size:8.8px;line-height:11px;color:#5a5a5a;transform:scaleX(0.835);transform-origin:50% 50%;">Hold</span>
<div style="left:634.3px;top:226.6px;width:30.4px;height:14.9px;background:#8ccdf7;"></div>
<span style="left:640.0px;top:228.8px;font-size:8.8px;line-height:11px;color:#101010;transform:scaleX(0.835);transform-origin:50% 50%;">Main</span>
<div style="left:667.2px;top:226.6px;width:29.9px;height:14.9px;background:#d4d4d4;"></div>
<span style="left:679.7px;top:228.8px;font-size:8.8px;line-height:11px;color:#5a5a5a;transform:scaleX(0.835);transform-origin:50% 50%;">1</span>
<div style="left:699.7px;top:226.6px;width:29.9px;height:14.9px;background:#d4d4d4;"></div>
<span style="left:712.2px;top:228.8px;font-size:8.8px;line-height:11px;color:#5a5a5a;transform:scaleX(0.835);transform-origin:50% 50%;">2</span>
<div style="left:732.2px;top:226.6px;width:29.7px;height:14.9px;background:#d4d4d4;"></div>
<span style="left:744.6px;top:228.8px;font-size:8.8px;line-height:11px;color:#5a5a5a;transform:scaleX(0.835);transform-origin:50% 50%;">3</span>
<div style="left:764.7px;top:226.6px;width:30.1px;height:14.9px;background:#d4d4d4;"></div>
<span style="left:777.3px;top:228.8px;font-size:8.8px;line-height:11px;color:#5a5a5a;transform:scaleX(0.835);transform-origin:50% 50%;">4</span>
<div style="left:634.3px;top:261.8px;width:43.7px;height:15.8px;background:#8ccdf7;"></div>
<span style="left:637.3px;top:264.4px;font-size:8.8px;line-height:11px;color:#101010;transform:scaleX(0.835);transform-origin:50% 50%;">Spectrum</span>
<div style="left:683.2px;top:261.8px;width:43.0px;height:15.8px;background:#cfcfcf;"></div>
<span style="left:687.5px;top:264.4px;font-size:8.8px;line-height:11px;color:#101010;transform:scaleX(0.835);transform-origin:50% 50%;">Waterfall</span>
<div style="left:731.4px;top:261.8px;width:42.8px;height:15.8px;background:#cfcfcf;"></div>
<span style="left:743.7px;top:264.4px;font-size:8.8px;line-height:11px;color:#101010;transform:scaleX(0.835);transform-origin:50% 50%;">Both</span>
<div style="left:634.3px;top:292.8px;width:43.5px;height:14.7px;background:#cfcfcf;"></div>
<span style="left:645.0px;top:294.8px;font-size:8.8px;line-height:11px;color:#101010;transform:scaleX(0.835);transform-origin:50% 50%;">Trace</span>
<div style="left:683.0px;top:292.8px;width:42.8px;height:14.7px;background:#cfcfcf;"></div>
<span style="left:689.0px;top:294.8px;font-size:8.8px;line-height:11px;color:#101010;transform:scaleX(0.835);transform-origin:50% 50%;">Cursors</span>
<div style="left:730.4px;top:292.8px;width:43.8px;height:14.7px;background:#8ccdf7;"></div>
<span style="left:736.4px;top:294.8px;font-size:8.8px;line-height:11px;color:#101010;transform:scaleX(0.835);transform-origin:50% 50%;">Markers</span>
<span style="left:635.2px;top:322.9px;font-size:8.8px;line-height:11px;color:#101010;transform:scaleX(0.802);transform-origin:0 50%;">Threshold</span>
<div style="left:672.9px;top:321.4px;width:28.1px;height:13.3px;background:#dedede;box-shadow:inset 0 0 0 0.7px #bcbcbc;"></div>
<div style="left:673.6px;top:322.2px;width:17.8px;height:11.7px;background:#ffffff;"></div>
<span style="left:675.1px;top:322.7px;font-size:8.8px;line-height:11px;color:#303030;transform:scaleX(0.835);transform-origin:0 50%;">8</span>
<svg style="left:693.5px;top:322.5px" width="6" height="11" viewBox="0 0 6 11"><path d="M0.8 4 L3 1.4 L5.2 4 Z M0.8 7 L3 9.6 L5.2 7 Z" fill="#303030"/></svg>
<span style="left:635.2px;top:341.7px;font-size:8.8px;line-height:11px;color:#101010;transform:scaleX(0.831);transform-origin:0 50%;">Window</span>
<div style="left:672.9px;top:339.5px;width:28.1px;height:13.7px;background:#dedede;box-shadow:inset 0 0 0 0.7px #bcbcbc;"></div>
<div style="left:673.6px;top:340.3px;width:17.8px;height:12.1px;background:#ffffff;"></div>
<span style="left:675.1px;top:341.1px;font-size:8.8px;line-height:11px;color:#303030;transform:scaleX(0.835);transform-origin:0 50%;">14</span>
<svg style="left:693.5px;top:340.9px" width="6" height="11" viewBox="0 0 6 11"><path d="M0.8 4 L3 1.4 L5.2 4 Z M0.8 7 L3 9.6 L5.2 7 Z" fill="#303030"/></svg>
<div style="left:713.7px;top:320.8px;width:34.8px;height:14.5px;background:#8ccdf7;"></div>
<span style="left:726.2px;top:322.8px;font-size:8.8px;line-height:11px;color:#101010;transform:scaleX(0.835);transform-origin:50% 50%;">All</span>
<div style="left:753.8px;top:320.8px;width:34.7px;height:14.5px;background:#bcbcbc;"></div>
<span style="left:758.9px;top:322.8px;font-size:8.8px;line-height:11px;color:#101010;transform:scaleX(0.835);transform-origin:50% 50%;">Single</span>
<div style="left:713.7px;top:339.5px;width:34.8px;height:14.3px;background:#bcbcbc;"></div>
<span style="left:722.1px;top:341.3px;font-size:8.8px;line-height:11px;color:#101010;transform:scaleX(0.835);transform-origin:50% 50%;">Next</span>
<div style="left:753.8px;top:339.5px;width:34.7px;height:14.3px;background:#bcbcbc;"></div>
<span style="left:762.1px;top:341.3px;font-size:8.8px;line-height:11px;color:#101010;transform:scaleX(0.835);transform-origin:50% 50%;">Prev</span>
<div style="left:753.8px;top:358.7px;width:34.7px;height:14.6px;background:#bcbcbc;"></div>
<span style="left:762.6px;top:360.7px;font-size:8.8px;line-height:11px;color:#101010;transform:scaleX(0.835);transform-origin:50% 50%;">First</span>
<div style="left:634.3px;top:369.5px;width:35.6px;height:15.2px;background:#8ccdf7;"></div>
<span style="left:641.8px;top:371.8px;font-size:8.8px;line-height:11px;color:#101010;transform:scaleX(0.835);transform-origin:50% 50%;">Enab</span>
<span style="left:682.9px;top:363.1px;font-size:8.8px;line-height:11px;color:#101010;transform:scaleX(0.846);transform-origin:100% 50%;">Freq</span>
<span style="left:680.0px;top:376.0px;font-size:8.8px;line-height:11px;color:#101010;transform:scaleX(0.775);transform-origin:100% 50%;">Level</span>
<span style="left:711.0px;top:363.1px;font-size:8.8px;line-height:11px;color:#1818c8;font-weight:bold;transform:scaleX(0.966);transform-origin:0 50%;">&lt;X&gt;</span>
<span style="left:711.0px;top:376.0px;font-size:8.8px;line-height:11px;color:#1818c8;font-weight:bold;transform:scaleX(0.966);transform-origin:0 50%;">&lt;Y&gt;</span>
<span style="left:634.8px;top:419.3px;font-size:8.8px;line-height:11px;color:#101010;font-weight:bold;transform:scaleX(0.966);transform-origin:0 50%;">Waterfall</span>
<div style="left:632.4px;top:433.3px;width:35.6px;height:15.7px;background:#cfcfcf;"></div>
<span style="left:636.5px;top:435.8px;font-size:8.8px;line-height:11px;color:#101010;transform:scaleX(0.835);transform-origin:50% 50%;">Marker</span>
<div style="left:671.0px;top:433.3px;width:14.7px;height:15.7px;background:#cfcfcf;"></div>
<span style="left:674.7px;top:435.8px;font-size:8.8px;line-height:11px;color:#101010;transform:scaleX(0.835);transform-origin:50% 50%;">M</span>
<div style="left:688.5px;top:433.3px;width:26.1px;height:15.7px;background:#cfcfcf;"></div>
<span style="left:692.5px;top:435.8px;font-size:8.8px;line-height:11px;color:#101010;transform:scaleX(0.835);transform-origin:50% 50%;">UTC</span>
<div style="left:717.5px;top:433.3px;width:35.2px;height:15.7px;background:#8ccdf7;"></div>
<span style="left:722.6px;top:435.8px;font-size:8.8px;line-height:11px;color:#101010;transform:scaleX(0.835);transform-origin:50% 50%;">Pause</span>
<div style="left:756.1px;top:433.3px;width:35.2px;height:15.7px;background:#cfcfcf;"></div>
<span style="left:763.2px;top:435.8px;font-size:8.8px;line-height:11px;color:#101010;transform:scaleX(0.835);transform-origin:50% 50%;">Clear</span>
<svg style="left:635.0px;top:455.0px" width="10" height="10" viewBox="0 0 10 10"><circle cx="5" cy="5" r="4" fill="#fff" stroke="#333" stroke-width="0.7"/><circle cx="5" cy="5" r="2.1" fill="#222"/></svg>
<span style="left:649.0px;top:454.7px;font-size:8.8px;line-height:11px;color:#101010;transform:scaleX(0.829);transform-origin:0 50%;">Time-Date</span>
<div style="left:688.2px;top:453.8px;width:102.6px;height:13.7px;background:#e9e9e9;box-shadow:inset 0 0 0 0.7px #b4b4b4;"></div>
<span style="left:691.2px;top:455.3px;font-size:8.8px;line-height:11px;color:#202020;transform:scaleX(0.835);transform-origin:0 50%;">Long Date  - LongTime</span>
<svg style="left:779.3px;top:457.9px" width="8" height="6" viewBox="0 0 8 6"><path d="M1.2 1.6 L4 4.4 L6.8 1.6" fill="none" stroke="#505050" stroke-width="0.9"/></svg>
<svg style="left:635.0px;top:470.7px" width="10" height="10" viewBox="0 0 10 10"><circle cx="5" cy="5" r="4" fill="#fff" stroke="#333" stroke-width="0.7"/></svg>
<span style="left:649.0px;top:470.2px;font-size:8.8px;line-height:11px;color:#101010;transform:scaleX(0.818);transform-origin:0 50%;">Elapsed</span>
<span style="left:718.6px;top:471.5px;font-size:8.8px;line-height:11px;color:#101010;transform:scaleX(0.825);transform-origin:0 50%;">Interval</span>
<div style="left:747.5px;top:470.5px;width:43.3px;height:14.3px;background:#e9e9e9;box-shadow:inset 0 0 0 0.7px #b4b4b4;"></div>
<span style="left:750.5px;top:472.3px;font-size:8.8px;line-height:11px;color:#202020;transform:scaleX(0.835);transform-origin:0 50%;">30</span>
<svg style="left:779.3px;top:474.9px" width="8" height="6" viewBox="0 0 8 6"><path d="M1.2 1.6 L4 4.4 L6.8 1.6" fill="none" stroke="#505050" stroke-width="0.9"/></svg>
<span style="left:637.0px;top:494.9px;font-size:8.8px;line-height:11px;color:#101010;transform:scaleX(0.827);transform-origin:0 50%;">Brightness</span>
<span style="left:637.0px;top:514.1px;font-size:8.8px;line-height:11px;color:#101010;transform:scaleX(0.812);transform-origin:0 50%;">Contrast</span>
<div style="left:678.0px;top:493.8px;width:113.3px;height:13.9px;background:#c7c7c7;"></div>
<div style="left:682.8px;top:499.2px;width:103.8px;height:1.8px;background:#e4e4e4;"></div>
<svg style="left:731.0px;top:495.4px" width="8" height="11" viewBox="0 0 8 11"><path d="M0.8 0.3 H7.2 V7 L4 10.5 L0.8 7 Z" fill="#1a74d4"/></svg>
<div style="left:678.0px;top:512.8px;width:113.3px;height:13.9px;background:#c7c7c7;"></div>
<div style="left:682.8px;top:518.2px;width:103.8px;height:1.8px;background:#e4e4e4;"></div>
<svg style="left:731.0px;top:514.4px" width="8" height="11" viewBox="0 0 8 11"><path d="M0.8 0.3 H7.2 V7 L4 10.5 L0.8 7 Z" fill="#1a74d4"/></svg>
<div style="left:808.6px;top:45.9px;width:173.2px;height:324.1px;background:#e4e4e4;"></div>
<div style="left:808.6px;top:372.8px;width:173.2px;height:163.7px;background:#e4e4e4;"></div>
<div style="left:808.6px;top:529.0px;width:173.2px;height:7.5px;background:linear-gradient(#e4e4e4,#dde2ea);"></div>
<span style="left:814.8px;top:45.9px;font-size:8.8px;line-height:11px;color:#101010;font-weight:bold;transform:scaleX(0.942);transform-origin:0 50%;">Frequency and IF</span>
<span style="left:820.0px;top:64.5px;font-size:8.8px;line-height:11px;color:#101010;transform:scaleX(0.840);transform-origin:0 50%;">Centre freq</span>
<div style="left:864.3px;top:61.3px;width:76.2px;height:15.8px;background:#0a0a0a;"></div>
<span style="left:865.9px;top:61.1px;font-size:13.2px;line-height:17px;color:#f4f4f4;transform:scaleX(0.941);transform-origin:0 50%;">130.000000</span>
<div style="left:950.4px;top:52.4px;width:24.4px;height:14.3px;background:#d9edfb;box-shadow:inset 0 0 0 1px #3f86c0;"></div>
<span style="left:954.6px;top:54.6px;font-size:7.8px;line-height:10px;color:#303a48;transform:scaleX(0.905);transform-origin:50% 50%;">MHz</span>
<div style="left:950.4px;top:72.7px;width:24.0px;height:13.6px;background:#e3e3e3;box-shadow:inset 0 0 0 1px #f4f4f4;"></div>
<span style="left:955.0px;top:74.6px;font-size:7.8px;line-height:10px;color:#303030;transform:scaleX(0.950);transform-origin:50% 50%;">KHz</span>
<span style="left:820.6px;top:84.9px;font-size:8.8px;line-height:11px;color:#101010;transform:scaleX(0.818);transform-origin:0 50%;">Start - MHz</span>
<span style="left:864.7px;top:82.7px;font-size:11.6px;line-height:15px;color:#2222d2;font-weight:bold;transform:scaleX(0.990);transform-origin:0 50%;">30.000000</span>
<span style="left:820.6px;top:101.1px;font-size:8.8px;line-height:11px;color:#101010;transform:scaleX(0.818);transform-origin:0 50%;">End - MHz</span>
<span style="left:864.7px;top:98.9px;font-size:11.6px;line-height:15px;color:#2222d2;font-weight:bold;transform:scaleX(0.989);transform-origin:0 50%;">230.000000</span>
<span style="left:821.0px;top:119.3px;font-size:8.8px;line-height:11px;color:#101010;font-weight:bold;transform:scaleX(0.930);transform-origin:0 50%;">Span</span>
<div style="left:822.8px;top:132.4px;width:41.9px;height:13.3px;background:#d3d3d3;"></div>
<span style="left:828.0px;top:133.8px;font-size:8.8px;line-height:11px;color:#101010;transform:scaleX(0.835);transform-origin:0 50%;">1 KHz</span>
<div style="left:873.9px;top:132.4px;width:41.8px;height:13.3px;background:#d3d3d3;"></div>
<span style="left:879.1px;top:133.8px;font-size:8.8px;line-height:11px;color:#101010;transform:scaleX(0.835);transform-origin:0 50%;">2 KHz</span>
<div style="left:924.7px;top:132.4px;width:41.9px;height:13.3px;background:#d3d3d3;"></div>
<span style="left:929.9px;top:133.8px;font-size:8.8px;line-height:11px;color:#101010;transform:scaleX(0.835);transform-origin:0 50%;">5 KHz</span>
<div style="left:822.8px;top:148.6px;width:41.9px;height:13.3px;background:#d3d3d3;"></div>
<span style="left:828.0px;top:149.9px;font-size:8.8px;line-height:11px;color:#101010;transform:scaleX(0.835);transform-origin:0 50%;">10 KHz</span>
<div style="left:873.9px;top:148.6px;width:41.8px;height:13.3px;background:#d3d3d3;"></div>
<span style="left:879.1px;top:149.9px;font-size:8.8px;line-height:11px;color:#101010;transform:scaleX(0.835);transform-origin:0 50%;">20 KHz</span>
<div style="left:924.7px;top:148.6px;width:41.9px;height:13.3px;background:#d3d3d3;"></div>
<span style="left:929.9px;top:149.9px;font-size:8.8px;line-height:11px;color:#101010;transform:scaleX(0.835);transform-origin:0 50%;">50 KHz</span>
<div style="left:822.8px;top:164.8px;width:41.9px;height:13.3px;background:#d3d3d3;"></div>
<span style="left:828.0px;top:166.1px;font-size:8.8px;line-height:11px;color:#101010;transform:scaleX(0.835);transform-origin:0 50%;">100 KHz</span>
<div style="left:873.9px;top:164.8px;width:41.8px;height:13.3px;background:#d3d3d3;"></div>
<span style="left:879.1px;top:166.1px;font-size:8.8px;line-height:11px;color:#101010;transform:scaleX(0.835);transform-origin:0 50%;">200 KHz</span>
<div style="left:924.7px;top:164.8px;width:41.9px;height:13.3px;background:#d3d3d3;"></div>
<span style="left:929.9px;top:166.1px;font-size:8.8px;line-height:11px;color:#101010;transform:scaleX(0.835);transform-origin:0 50%;">500 KHz</span>
<div style="left:822.8px;top:180.9px;width:41.9px;height:13.3px;background:#d3d3d3;"></div>
<span style="left:828.0px;top:182.3px;font-size:8.8px;line-height:11px;color:#101010;transform:scaleX(0.835);transform-origin:0 50%;">1 MHz</span>
<div style="left:873.9px;top:180.9px;width:41.8px;height:13.3px;background:#d3d3d3;"></div>
<span style="left:879.1px;top:182.3px;font-size:8.8px;line-height:11px;color:#101010;transform:scaleX(0.835);transform-origin:0 50%;">2 MHz</span>
<div style="left:924.7px;top:180.9px;width:41.9px;height:13.3px;background:#d3d3d3;"></div>
<span style="left:929.9px;top:182.3px;font-size:8.8px;line-height:11px;color:#101010;transform:scaleX(0.835);transform-origin:0 50%;">5 MHz</span>
<div style="left:822.8px;top:197.1px;width:41.9px;height:13.3px;background:#d3d3d3;"></div>
<span style="left:828.0px;top:198.5px;font-size:8.8px;line-height:11px;color:#101010;transform:scaleX(0.835);transform-origin:0 50%;">10 MHz</span>
<div style="left:873.9px;top:197.1px;width:41.8px;height:13.3px;background:#d3d3d3;"></div>
<span style="left:879.1px;top:198.5px;font-size:8.8px;line-height:11px;color:#101010;transform:scaleX(0.835);transform-origin:0 50%;">20 MHz</span>
<div style="left:924.7px;top:197.1px;width:41.9px;height:13.3px;background:#d3d3d3;"></div>
<span style="left:929.9px;top:198.5px;font-size:8.8px;line-height:11px;color:#101010;transform:scaleX(0.835);transform-origin:0 50%;">50 MHz</span>
<div style="left:822.8px;top:213.3px;width:41.9px;height:13.3px;background:#d3d3d3;"></div>
<span style="left:828.0px;top:214.7px;font-size:8.8px;line-height:11px;color:#101010;transform:scaleX(0.835);transform-origin:0 50%;">100 MHz</span>
<div style="left:873.9px;top:213.3px;width:41.8px;height:13.3px;background:#8ccdf7;"></div>
<span style="left:879.1px;top:214.7px;font-size:8.8px;line-height:11px;color:#101010;transform:scaleX(0.835);transform-origin:0 50%;">200 MHz</span>
<div style="left:924.7px;top:213.3px;width:41.9px;height:13.3px;background:#d3d3d3;"></div>
<span style="left:929.9px;top:214.7px;font-size:8.8px;line-height:11px;color:#101010;transform:scaleX(0.835);transform-origin:0 50%;">500 MHz</span>
<div style="left:822.8px;top:229.5px;width:41.9px;height:13.3px;background:#d3d3d3;"></div>
<span style="left:828.0px;top:230.8px;font-size:8.8px;line-height:11px;color:#101010;transform:scaleX(0.835);transform-origin:0 50%;">1 GHz</span>
<div style="left:873.9px;top:229.5px;width:41.8px;height:13.3px;background:#d3d3d3;"></div>
<span style="left:879.1px;top:230.8px;font-size:8.8px;line-height:11px;color:#101010;transform:scaleX(0.835);transform-origin:0 50%;">2 GHz</span>
<span style="left:828.6px;top:254.8px;font-size:8.8px;line-height:11px;color:#101010;font-weight:bold;transform:scaleX(0.955);transform-origin:0 50%;">IF-KHz</span>
<span style="left:883.2px;top:254.8px;font-size:8.8px;line-height:11px;color:#101010;font-weight:bold;transform:scaleX(0.958);transform-origin:0 50%;">Sampling rate-Ms/Sec</span>
<div style="left:824.4px;top:268.2px;width:42.6px;height:14.6px;background:#cfcfcf;"></div>
<span style="left:827.6px;top:270.2px;font-size:8.8px;line-height:11px;color:#101010;transform:scaleX(0.835);transform-origin:50% 50%;">2048KHz</span>
<div style="left:878.4px;top:267.0px;width:41.9px;height:15.8px;background:#8ccdf7;"></div>
<span style="left:886.4px;top:269.6px;font-size:8.8px;line-height:11px;color:#101010;transform:scaleX(0.835);transform-origin:50% 50%;">6 Ms/s</span>
<div style="left:927.2px;top:268.2px;width:41.8px;height:14.6px;background:#cfcfcf;"></div>
<span style="left:935.1px;top:270.2px;font-size:8.8px;line-height:11px;color:#101010;transform:scaleX(0.835);transform-origin:50% 50%;">8 Ms/s</span>
<div style="left:824.4px;top:286.6px;width:42.6px;height:14.3px;background:#cfcfcf;"></div>
<span style="left:830.0px;top:288.4px;font-size:8.8px;line-height:11px;color:#7a7a7a;transform:scaleX(0.835);transform-origin:50% 50%;">450KHz</span>
<div style="left:878.4px;top:286.6px;width:41.9px;height:14.3px;background:#cfcfcf;"></div>
<span style="left:883.9px;top:288.4px;font-size:8.8px;line-height:11px;color:#101010;transform:scaleX(0.835);transform-origin:50% 50%;">10 Ms/s</span>
<div style="left:824.7px;top:305.2px;width:42.3px;height:15.3px;background:#8ccdf7;"></div>
<span style="left:831.7px;top:307.6px;font-size:8.8px;line-height:11px;color:#101010;transform:scaleX(0.835);transform-origin:50% 50%;">Zero IF</span>
<span style="left:880.9px;top:309.2px;font-size:8.8px;line-height:11px;color:#101010;transform:scaleX(0.853);transform-origin:0 50%;">Window</span>
<div style="left:915.2px;top:308.0px;width:59.9px;height:14.0px;background:#e9e9e9;box-shadow:inset 0 0 0 0.7px #b4b4b4;"></div>
<span style="left:918.2px;top:309.7px;font-size:8.8px;line-height:11px;color:#202020;transform:scaleX(0.835);transform-origin:0 50%;">Blackman</span>
<svg style="left:963.6px;top:312.3px" width="8" height="6" viewBox="0 0 8 6"><path d="M1.2 1.6 L4 4.4 L6.8 1.6" fill="none" stroke="#505050" stroke-width="0.9"/></svg>
<span style="left:823.2px;top:330.8px;font-size:8.8px;line-height:11px;color:#101010;transform:scaleX(0.814);transform-origin:0 50%;">NFFT</span>
<div style="left:859.4px;top:329.4px;width:48.7px;height:13.5px;background:#e9e9e9;box-shadow:inset 0 0 0 0.7px #b4b4b4;"></div>
<span style="left:862.4px;top:330.8px;font-size:8.8px;line-height:11px;color:#202020;transform:scaleX(0.835);transform-origin:0 50%;">16384</span>
<svg style="left:896.6px;top:333.4px" width="8" height="6" viewBox="0 0 8 6"><path d="M1.2 1.6 L4 4.4 L6.8 1.6" fill="none" stroke="#505050" stroke-width="0.9"/></svg>
<span style="left:914.2px;top:330.8px;font-size:8.8px;line-height:11px;color:#101010;transform:scaleX(0.902);transform-origin:0 50%;">Hz/bin</span>
<span style="left:939.9px;top:330.8px;font-size:8.8px;line-height:11px;color:#101010;font-weight:bold;transform:scaleX(1.011);transform-origin:0 50%;">366.21</span>
<div style="left:822.8px;top:348.6px;width:51.4px;height:14.7px;background:#cfcfcf;"></div>
<span style="left:827.0px;top:350.2px;font-size:9.2px;line-height:12px;color:#101010;font-weight:bold;transform:scaleX(0.940);transform-origin:50% 50%;">Track gen</span>
<div style="left:879.0px;top:348.6px;width:51.4px;height:14.7px;background:#cfcfcf;"></div>
<span style="left:893.5px;top:350.2px;font-size:9.2px;line-height:12px;color:#101010;font-weight:bold;transform:scaleX(0.940);transform-origin:50% 50%;">Input</span>
<span style="left:814.8px;top:372.7px;font-size:8.8px;line-height:11px;color:#101010;font-weight:bold;transform:scaleX(0.907);transform-origin:0 50%;">Input</span>
<span style="left:815.6px;top:388.9px;font-size:8.8px;line-height:11px;color:#101010;transform:scaleX(0.854);transform-origin:0 50%;">RSP Select</span>
<div style="left:868.7px;top:387.2px;width:103.6px;height:14.3px;background:#cdcdcd;box-shadow:inset 0 0 0 0.6px #c0c0c0;"></div>
<span style="left:871.7px;top:389.1px;font-size:8.8px;line-height:11px;color:#9a9a9a;transform:scaleX(0.835);transform-origin:0 50%;">RSP1A - 1804063295</span>
<svg style="left:960.8px;top:391.7px" width="8" height="6" viewBox="0 0 8 6"><path d="M1.2 1.6 L4 4.4 L6.8 1.6" fill="none" stroke="#b4b4b4" stroke-width="0.9"/></svg>
<div style="left:818.5px;top:407.6px;width:40.5px;height:14.7px;background:#d3d3d3;"></div>
<span style="left:830.7px;top:409.7px;font-size:8.8px;line-height:11px;color:#666666;transform:scaleX(0.835);transform-origin:50% 50%;">Hi Z</span>
<div style="left:863.2px;top:407.6px;width:40.6px;height:14.7px;background:#d3d3d3;"></div>
<span style="left:875.7px;top:409.7px;font-size:8.8px;line-height:11px;color:#666666;transform:scaleX(0.835);transform-origin:50% 50%;">MW</span>
<div style="left:909.5px;top:407.6px;width:40.5px;height:14.7px;background:#d3d3d3;"></div>
<span style="left:914.7px;top:409.7px;font-size:8.8px;line-height:11px;color:#4c4c4c;transform:scaleX(0.835);transform-origin:50% 50%;">Tuner 1</span>
<div style="left:818.5px;top:425.3px;width:40.5px;height:15.6px;background:#8ccdf7;"></div>
<span style="left:828.2px;top:427.8px;font-size:8.8px;line-height:11px;color:#101010;transform:scaleX(0.835);transform-origin:50% 50%;">Ant A</span>
<div style="left:863.2px;top:425.3px;width:40.6px;height:15.6px;background:#d3d3d3;"></div>
<span style="left:869.8px;top:427.8px;font-size:8.8px;line-height:11px;color:#101010;transform:scaleX(0.835);transform-origin:50% 50%;">BC/FM</span>
<div style="left:909.5px;top:425.3px;width:40.5px;height:15.6px;background:#d3d3d3;"></div>
<span style="left:914.7px;top:427.8px;font-size:8.8px;line-height:11px;color:#4c4c4c;transform:scaleX(0.835);transform-origin:50% 50%;">Tuner 2</span>
<div style="left:818.5px;top:445.1px;width:40.5px;height:14.9px;background:#d3d3d3;"></div>
<span style="left:828.0px;top:447.2px;font-size:8.8px;line-height:11px;color:#666666;transform:scaleX(0.835);transform-origin:50% 50%;">Ant B</span>
<div style="left:863.2px;top:445.1px;width:40.6px;height:14.9px;background:#d3d3d3;"></div>
<span style="left:874.5px;top:447.2px;font-size:8.8px;line-height:11px;color:#101010;transform:scaleX(0.835);transform-origin:50% 50%;">DAB</span>
<div style="left:909.5px;top:445.1px;width:40.5px;height:14.9px;background:#d3d3d3;"></div>
<span style="left:918.5px;top:447.2px;font-size:8.8px;line-height:11px;color:#101010;transform:scaleX(0.835);transform-origin:50% 50%;">BiasT</span>
<span style="left:820.9px;top:467.3px;font-size:8.8px;line-height:11px;color:#101010;transform:scaleX(0.837);transform-origin:0 50%;">dBm Trim</span>
<div style="left:861.9px;top:466.7px;width:33.3px;height:13.2px;background:#dedede;box-shadow:inset 0 0 0 0.7px #bcbcbc;"></div>
<div style="left:862.6px;top:467.5px;width:22.1px;height:11.6px;background:#ffffff;"></div>
<span style="left:864.1px;top:468.0px;font-size:8.8px;line-height:11px;color:#303030;transform:scaleX(0.835);transform-origin:0 50%;">0.0</span>
<svg style="left:887.2px;top:467.8px" width="6" height="11" viewBox="0 0 6 11"><path d="M0.8 4 L3 1.4 L5.2 4 Z M0.8 7 L3 9.6 L5.2 7 Z" fill="#303030"/></svg>
<span style="left:821.5px;top:484.2px;font-size:8.8px;line-height:11px;color:#101010;transform:scaleX(0.802);transform-origin:0 50%;">PPM trim</span>
<div style="left:861.9px;top:484.0px;width:33.3px;height:13.0px;background:#dedede;box-shadow:inset 0 0 0 0.7px #bcbcbc;"></div>
<div style="left:862.6px;top:484.8px;width:22.1px;height:11.4px;background:#ffffff;"></div>
<span style="left:864.1px;top:485.2px;font-size:8.8px;line-height:11px;color:#303030;transform:scaleX(0.835);transform-origin:0 50%;">0.0</span>
<svg style="left:887.2px;top:485.0px" width="6" height="11" viewBox="0 0 6 11"><path d="M0.8 4 L3 1.4 L5.2 4 Z M0.8 7 L3 9.6 L5.2 7 Z" fill="#303030"/></svg>
<span style="left:929.0px;top:467.3px;font-size:8.8px;line-height:11px;color:#101010;transform:scaleX(0.826);transform-origin:0 50%;">Current gain</span>
<span style="left:929.4px;top:485.1px;font-size:8.8px;line-height:11px;color:#101010;font-weight:bold;transform:scaleX(1.040);transform-origin:0 50%;">24.96</span>
<span style="left:818.5px;top:503.9px;font-size:8.8px;line-height:11px;color:#101010;transform:scaleX(0.831);transform-origin:0 50%;">ADC Status</span>
<span style="left:863.8px;top:503.9px;font-size:8.8px;line-height:11px;color:#101010;font-weight:bold;transform:scaleX(0.897);transform-origin:0 50%;">Normal</span>
</div></body></html>
